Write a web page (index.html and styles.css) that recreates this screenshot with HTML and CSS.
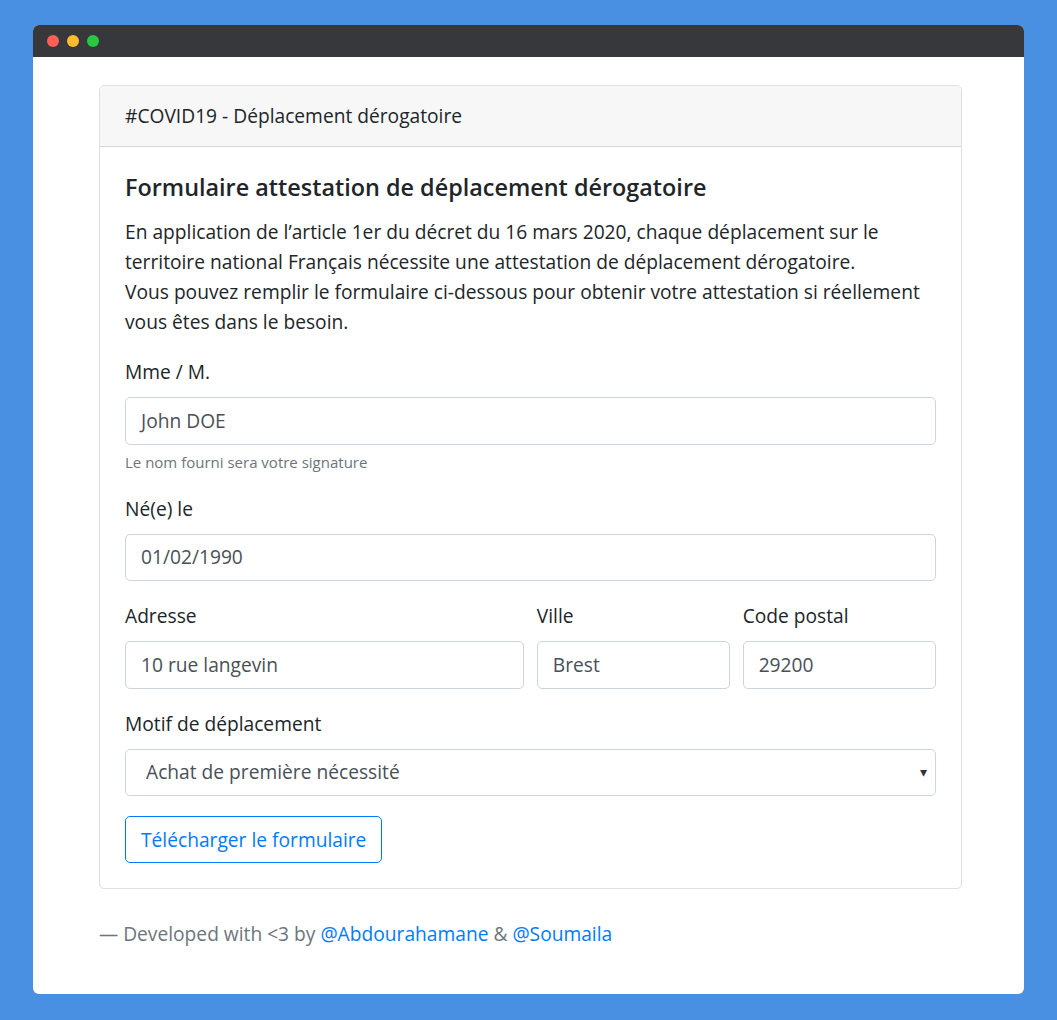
FILE: index.html
```html
<!DOCTYPE html>
<html lang="fr">
<head>
<meta charset="utf-8">
<title>Attestation</title>
<link rel="stylesheet" href="styles.css">
</head>
<body>
<div class="window">
  <div class="titlebar">
    <span class="dot red"></span><span class="dot yellow"></span><span class="dot green"></span>
  </div>
  <div class="content">
    <div class="container">
      <div class="card">
        <div class="card-header">#COVID19 - Déplacement dérogatoire</div>
        <div class="card-body">
          <h5 class="card-title">Formulaire attestation de déplacement dérogatoire</h5>
          <p class="intro">En application de l’article 1er du décret du 16 mars 2020, chaque déplacement sur le territoire national Français nécessite une attestation de déplacement dérogatoire.<br>Vous pouvez remplir le formulaire ci-dessous pour obtenir votre attestation si réellement vous êtes dans le besoin.</p>
          <div class="form-group">
            <label class="label">Mme / M.</label>
            <div class="input">John DOE</div>
            <small class="form-text">Le nom fourni sera votre signature</small>
          </div>
          <div class="form-group">
            <label class="label">Né(e) le</label>
            <div class="input">01/02/1990</div>
          </div>
          <div class="form-row form-group">
            <div class="col col-6">
              <label class="label">Adresse</label>
              <div class="input">10 rue langevin</div>
            </div>
            <div class="col col-3">
              <label class="label">Ville</label>
              <div class="input">Brest</div>
            </div>
            <div class="col col-3">
              <label class="label">Code postal</label>
              <div class="input">29200</div>
            </div>
          </div>
          <div class="form-group">
            <label class="label">Motif de déplacement</label>
            <div class="input select"><span>Achat de première nécessité</span><span class="caret">▾</span></div>
          </div>
          <div class="btn">Télécharger le formulaire</div>
        </div>
      </div>
      <p class="footer">— Developed with &lt;3 by <a href="#">@Abdourahamane</a> &amp; <a href="#">@Soumaila</a></p>
    </div>
  </div>
</div>
</body>
</html>
```
FILE: styles.css
```css
html, body { margin: 0; padding: 0; }
body {
  background: #4a90e2;
  padding: 25px 33px 26px 33px;
  font-family: "Open Sans", "Noto Sans", sans-serif;
  font-size: 19.2px;
  line-height: 30px;
  color: #212529;
}
.window {
  background: #fff;
  border-radius: 6px;
  overflow: hidden;
  height: 969px;
}
.titlebar {
  height: 32px;
  background: #36383b;
  display: flex;
  align-items: center;
  gap: 8px;
  padding-left: 14px;
}
.dot { width: 12px; height: 12px; border-radius: 50%; display: block; }
.red { background: #fe5f57; }
.yellow { background: #febc2e; }
.green { background: #28c840; }
.content { padding-top: 28px; }
.container {
  width: 863px;
  margin-left: 66px;
}
.card {
  border: 1px solid rgba(0,0,0,.125);
  border-radius: 5px;
  overflow: hidden;
}
.card-header {
  background: #f7f7f7;
  border-bottom: 1px solid rgba(0,0,0,.125);
  padding: 15px 25px;
  line-height: 30px;
}
.card-body { padding: 25px; }
.card-title {
  font-size: 23.4px;
  font-weight: 600;
  line-height: 30px;
  margin: 0 0 15px;
}
.intro { margin: 0 0 20px; }
.form-group { margin-bottom: 20px; }
.label { display: block; margin-bottom: 10px; }
.input {
  border: 1px solid #ced4da;
  border-radius: 5px;
  height: 47.5px;
  box-sizing: border-box;
  padding: 7.5px 15px;
  color: #495057;
}
.form-text {
  display: block;
  margin-top: 5px;
  font-size: 15px;
  line-height: 24px;
  color: #6c757d;
}
.form-row {
  display: flex;
  margin-left: -6.25px;
  margin-right: -6.25px;
}
.col { padding: 0 6.25px; box-sizing: border-box; }
.col-6 { flex: 0 0 50%; }
.col-3 { flex: 0 0 25%; }
.select {
  display: flex;
  justify-content: space-between;
  padding-left: 20px;
  padding-right: 8px;
}
.caret { font-size: 14px; color: #333; }
.btn {
  display: inline-block;
  border: 1px solid #007bff;
  border-radius: 5px;
  color: #007bff;
  padding: 7.5px 15px;
}
.footer {
  margin: 30px 0 0;
  color: #6c757d;
}
.footer a { color: #007bff; text-decoration: none; }
```
